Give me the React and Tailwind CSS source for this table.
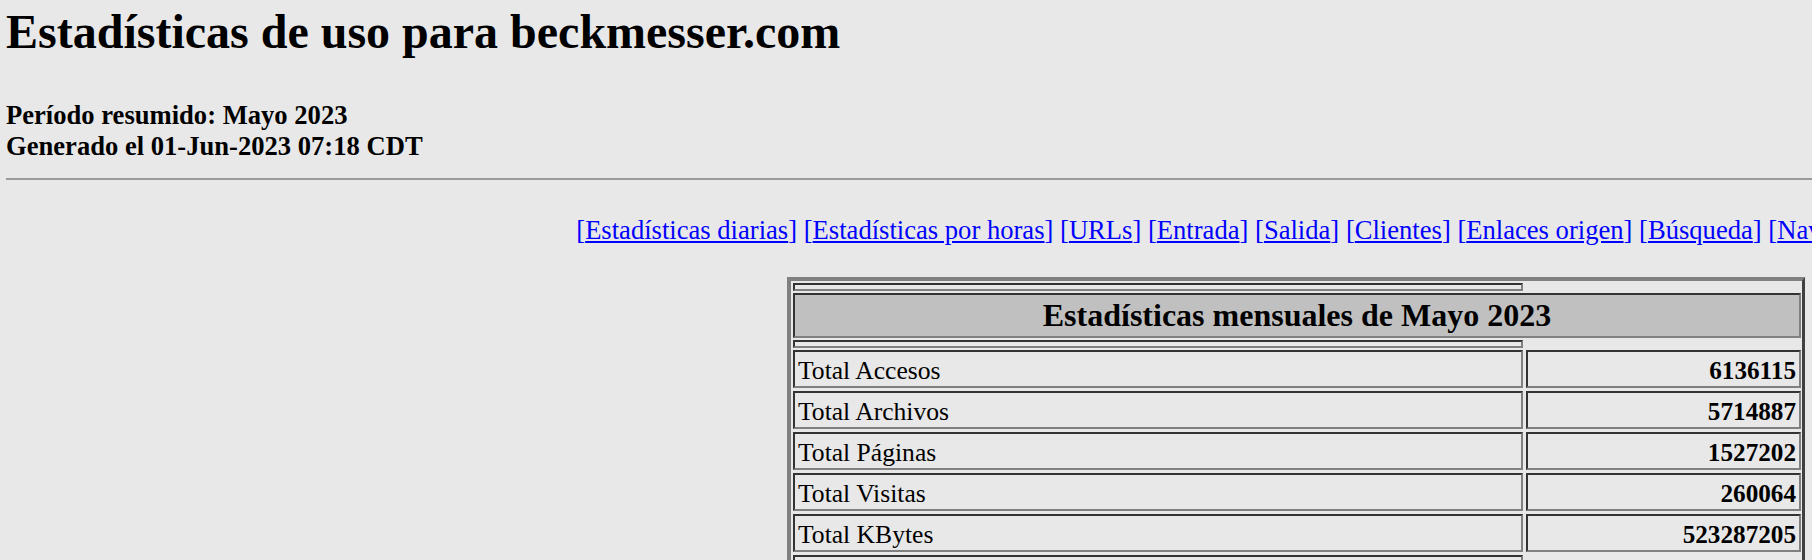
import React from 'react';

const links = [
  "Estadísticas diarias",
  "Estadísticas por horas",
  "URLs",
  "Entrada",
  "Salida",
  "Clientes",
  "Enlaces origen",
  "Búsqueda",
  "Navegadores",
  "Países",
];

const totals = [
  ["Total Accesos", "6136115"],
  ["Total Archivos", "5714887"],
  ["Total Páginas", "1527202"],
  ["Total Visitas", "260064"],
  ["Total KBytes", "523287205"],
];

// inset cell border, like an old html table with border=2
const cell = "border-2 border-t-[#333333] border-l-[#333333] border-r-[#808080] border-b-[#808080]";

function Spacer(){
  return <div className={"w-[730px] h-[8px] " + cell}></div>;
}

export default function App(){
  return (
    <div className="w-[1812px] h-[560px] overflow-hidden bg-[#e8e8e8] text-black font-['Liberation_Serif','Times_New_Roman',serif]">
      <div className="w-[2580px] ml-[6px]">

        <h1 className="pt-[4px] text-[48px] leading-[56px] font-bold">
          Estadísticas de uso para beckmesser.com
        </h1>

        <div className="mt-[40px] text-[26.6px] leading-[31px] font-bold">
          <div>Período resumido: Mayo 2023</div>
          <div>Generado el 01-Jun-2023 07:18 CDT</div>
        </div>

        <div className="mt-[16px] h-0 border-t-2 border-[#9a9a9a]"></div>

        <div className="mt-[35px] text-center text-[26.6px] leading-[31px] text-[#0000ff] whitespace-nowrap">
          {links.map((l, i) => (
            <span key={l}>
              {i > 0 && " "}[<a href={"#" + i} className="underline">{l}</a>]
            </span>
          ))}
        </div>

        <div className="mt-[31px] mx-auto w-[1018px] border-4 border-r-[3px] border-t-[#808080] border-l-[#808080] border-r-[#404040] border-b-[#404040] pt-[2px] pl-[2px] pr-[1px] pb-[2px]">
          <div className="flex flex-col gap-[2px]">
            <Spacer />
            <div className={"h-[45px] bg-[#c0c0c0] text-center text-[32px] leading-[41px] font-bold " + cell}>
              Estadísticas mensuales de Mayo 2023
            </div>
            <Spacer />
            <div className="flex flex-col gap-[3px]">
              {totals.map(([label, value]) => (
                <div key={label} className="flex gap-[3px]">
                  <div className={"w-[730px] h-[38px] pl-[3px] pt-[2px] text-[25.6px] leading-[34px] " + cell}>
                    {label}
                  </div>
                  <div className={"flex-1 h-[38px] pr-[3px] pt-[2px] text-right text-[25.2px] leading-[34px] font-bold " + cell}>
                    {value}
                  </div>
                </div>
              ))}
              <Spacer />
              <div className="flex gap-[3px]">
                <div className={"w-[730px] h-[38px] bg-[#c0c0c0] " + cell}></div>
                <div className={"flex-1 h-[38px] bg-[#c0c0c0] text-center text-[25.6px] leading-[34px] font-bold " + cell}>Promedio</div>
              </div>
            </div>
          </div>
        </div>

      </div>
    </div>
  );
}
